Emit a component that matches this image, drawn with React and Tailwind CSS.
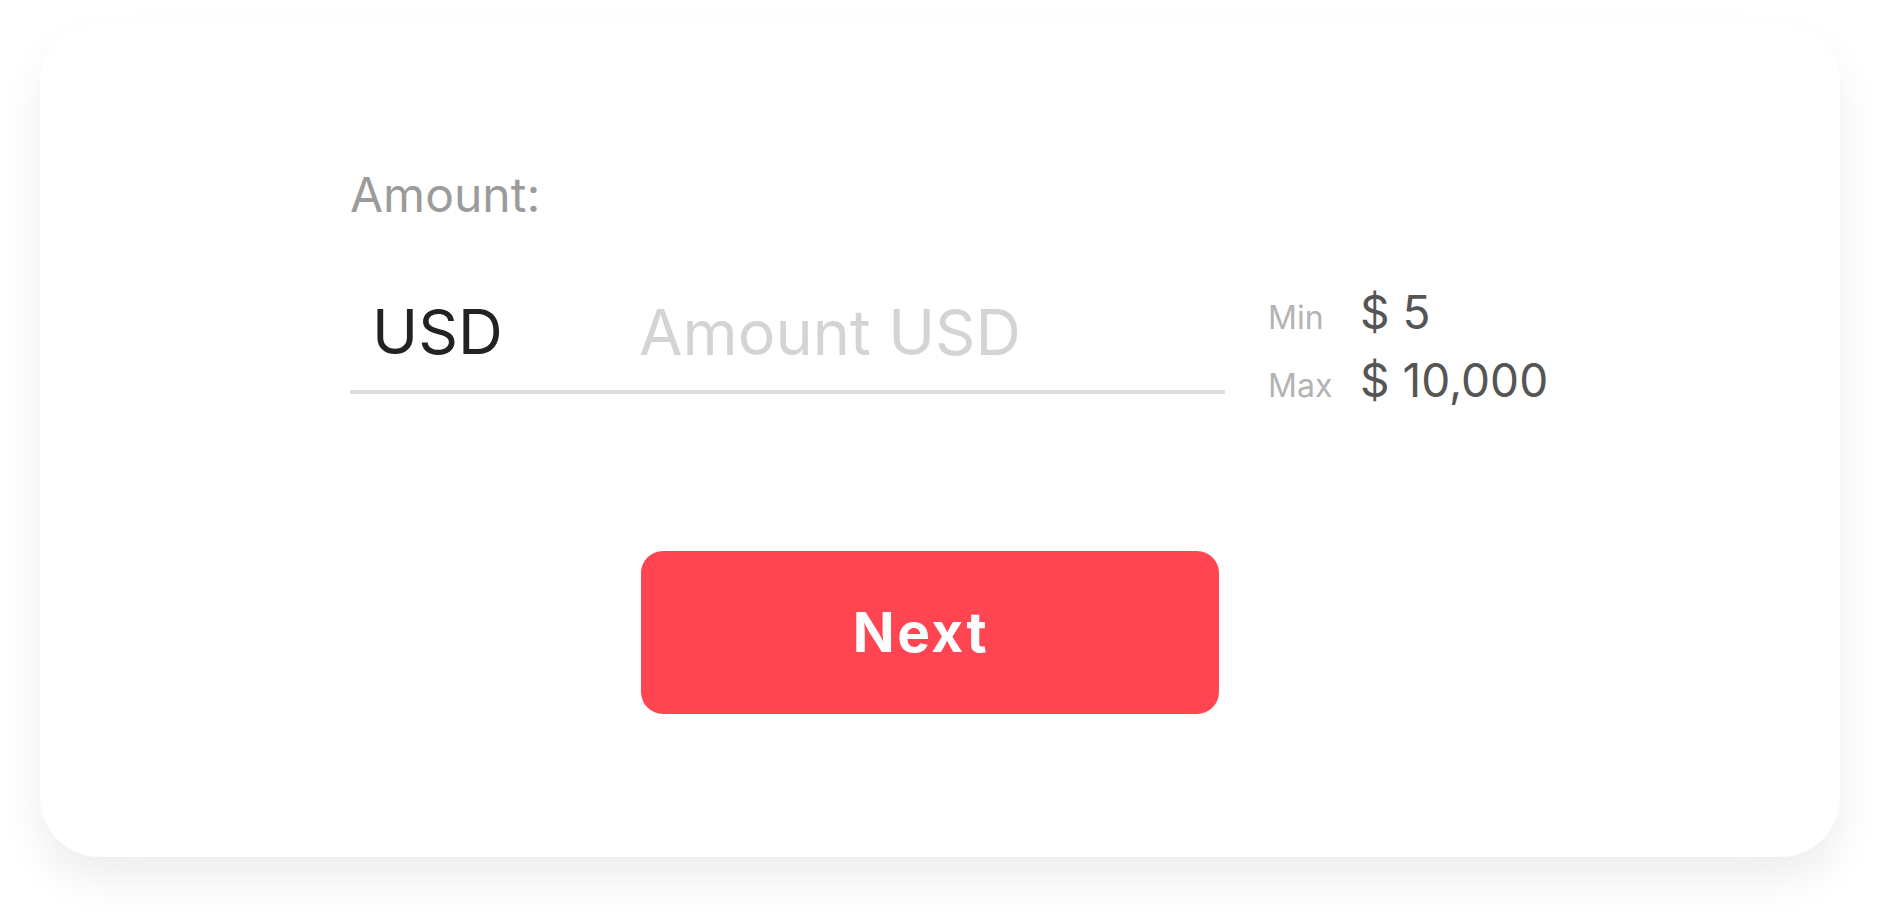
import React from 'react';

const App = () => {
  return (
    <div className="min-h-screen bg-white pt-[24px] pl-[40px] font-['Inter','Liberation_Sans',sans-serif]">
      <div className="w-[1800px] h-[833px] rounded-[60px] bg-white shadow-[0_22px_44px_rgba(0,0,0,0.07)] pt-[147px]">
        <div className="pl-[310px]">
          <label className="block text-[48px] leading-none text-[#9b9b9b]">Amount:</label>

          <div className="mt-[70px] flex items-start">
            <div className="w-[875px] pt-[12px] pb-[27px] border-b-4 border-[#dcdfe0] flex items-center">
              <span className="w-[289px] pl-[22px] text-[62px] leading-none text-[#222222]">USD</span>
              <input
                type="text"
                placeholder="Amount USD"
                className="flex-1 min-w-0 h-[62px] text-[63px] leading-none text-[#222222] bg-transparent outline-none placeholder:text-[#d4d4d4]"
              />
            </div>

            <div className="ml-[43px] flex flex-col gap-[22px]">
              <div className="flex items-baseline">
                <span className="w-[92px] text-[32px] leading-none text-[#b3b3b3]">Min</span>
                <span className="text-[46px] leading-none text-[#555555]">$ 5</span>
              </div>
              <div className="flex items-baseline">
                <span className="w-[92px] text-[32px] leading-none text-[#b3b3b3]">Max</span>
                <span className="text-[46px] leading-none text-[#555555]">$ 10,000</span>
              </div>
            </div>
          </div>
        </div>

        <div className="mt-[148px] flex justify-center pr-[20px]">
          <button className="w-[578px] h-[163px] pr-[18px] rounded-[22px] bg-[#ff4551] text-white text-[55px] font-bold leading-none tracking-[2.5px]">
            Next
          </button>
        </div>
      </div>
    </div>
  );
};

export default App;
